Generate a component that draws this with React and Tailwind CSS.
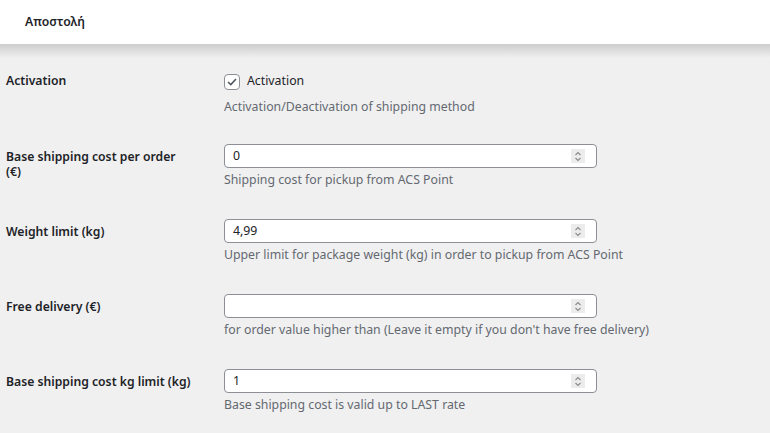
import React from "react";

const rows = [
    { label: "Base shipping cost per order\n(€)", value: "0", desc: "Shipping cost for pickup from ACS Point" },
    { label: "Weight limit (kg)", value: "4,99", desc: "Upper limit for package weight (kg) in order to pickup from ACS Point" },
    { label: "Free delivery (€)", value: "", desc: "for order value higher than (Leave it empty if you don't have free delivery)" },
    { label: "Base shipping cost kg limit (kg)", value: "1", desc: "Base shipping cost is valid up to LAST rate" },
];

function Spinner() {
    return (
        <div className="w-[14px] h-[14px] bg-[#ececec] flex items-center justify-center">
            <svg width="8" height="11" viewBox="0 0 8 11" fill="none" stroke="#8a8a8a" strokeWidth="1.1">
                <path d="M1.5 4 L4 1.5 L6.5 4" />
                <path d="M1.5 7 L4 9.5 L6.5 7" />
            </svg>
        </div>
    );
}

function App() {
    return (
        <div
            className="w-[770px] h-[433px] overflow-hidden bg-[#f0f0f1] text-[12.3px] text-[#1d2327]"
            style={{ fontFamily: '"Noto Sans", "Open Sans", sans-serif' }}
        >
            {/* header */}
            <div className="h-[44px] bg-white flex items-center pl-[25px] text-[12.2px] font-semibold text-[#1d2327]">
                Αποστολή
            </div>
            <div className="h-[14px] bg-gradient-to-b from-[#cdcdcd] to-[#f0f0f1]" />

            <div className="pt-[13px]">
                {/* activation */}
                <div className="flex h-[75px]">
                    <div className="w-[224px] pl-[6px] h-[21px] flex items-center font-semibold text-[12.2px]">Activation</div>
                    <div>
                        <div className="h-[21px] flex items-center gap-[7px]">
                            <div className="w-[16px] h-[16px] rounded-[4px] border border-[#8c8f94] bg-white flex items-center justify-center">
                                <svg width="10" height="8" viewBox="0 0 10 8" fill="none" stroke="#50575e" strokeWidth="1.6">
                                    <path d="M1 4 L3.8 6.6 L9 1" />
                                </svg>
                            </div>
                            <span>Activation</span>
                        </div>
                        <div className="mt-[7px] leading-[16px] text-[#646970]">Activation/Deactivation of shipping method</div>
                    </div>
                </div>

                {rows.map((row) => (
                    <div key={row.label} className="flex h-[75px]">
                        <div className="w-[224px] pl-[6px] pt-[3px]">
                            <div className="whitespace-pre-line font-semibold text-[12.2px] leading-[15px]">{row.label}</div>
                        </div>
                        <div className="-mt-[2px]">
                            <div className="w-[373px] h-[24px] rounded-[4px] border border-[#8c8f94] bg-white flex items-center pl-[8px] pr-[11px]">
                                <span className="flex-1">{row.value}</span>
                                <Spinner />
                            </div>
                            <div className="mt-[4px] leading-[16px] text-[#646970]">{row.desc}</div>
                        </div>
                    </div>
                ))}
            </div>
        </div>
    );
}

export default App;
